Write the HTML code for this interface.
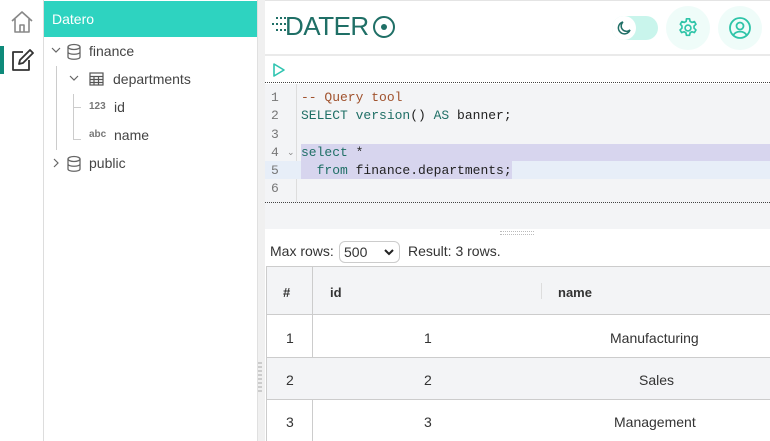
<!DOCTYPE html>
<html><head><style>
*{margin:0;padding:0;box-sizing:border-box}
body{width:770px;height:441px;overflow:hidden;background:#fff;font-family:"Liberation Sans",sans-serif;position:relative;color:#333}
.abs{position:absolute}
.mono{font-family:"Liberation Mono",monospace;font-size:13px}
.tree{font-size:14px;color:#444}
</style></head><body>
<!-- icon bar -->
<div class="abs" style="left:0;top:0;width:44px;height:441px;background:#fff;border-right:1px solid #ddd"></div>
<svg class="abs" style="left:10px;top:9px" width="24" height="26" viewBox="0 0 24 26" fill="none" stroke="#888" stroke-width="1.6" stroke-linejoin="round"><path d="M2 12 L12 3 L22 12 M5 10 V23 H19 V10 M10 23 V16 H14 V23"/></svg>
<div class="abs" style="left:0;top:46px;width:4px;height:28px;background:#0e8a7a"></div>
<svg class="abs" style="left:10px;top:47px" width="24" height="26" viewBox="0 0 24 26" fill="none" stroke="#333" stroke-width="1.8" stroke-linejoin="round"><path d="M13 5 H3 V23 H19 V13"/><path d="M9 17 L10 13 L20 3 L23 6 L13 16 Z"/></svg>
<!-- sidebar -->
<div class="abs" style="left:44px;top:1px;width:213px;height:36px;background:#2ed3c0;color:#fff;font-size:14px;line-height:36px;padding-left:8px">Datero</div>
<div class="abs" style="left:257px;top:0;width:8px;height:441px;background:#f0f0f0;border-left:1px solid #e0e0e0"></div>
<div class="abs" style="left:258px;top:362px;width:4px;height:30px;border-left:2px dotted #ccc;border-right:2px dotted #ccc"></div>
<div class="abs" style="left:56px;top:66px;width:1px;height:84px;background:#ccc"></div>
<div class="abs" style="left:73px;top:94px;width:1px;height:45px;background:#ccc"></div>
<div class="abs" style="left:73px;top:107px;width:8px;height:1px;background:#ccc"></div>
<div class="abs" style="left:73px;top:139px;width:8px;height:1px;background:#ccc"></div>
<svg class="abs" style="left:50px;top:44px" width="12" height="12" viewBox="0 0 12 12" fill="none" stroke="#666" stroke-width="1.2"><path d="M2 4 L6 8 L10 4"/></svg>
<svg class="abs" style="left:66px;top:43px" width="16" height="18" viewBox="0 0 16 18" fill="none" stroke="#666" stroke-width="1.3"><ellipse cx="8" cy="4" rx="6" ry="2.5"/><path d="M2 4 V14 C2 17 14 17 14 14 V4 M2 9 C2 12 14 12 14 9"/></svg>
<div class="abs tree" style="left:89px;top:43px">finance</div>
<svg class="abs" style="left:68px;top:72px" width="12" height="12" viewBox="0 0 12 12" fill="none" stroke="#666" stroke-width="1.2"><path d="M2 4 L6 8 L10 4"/></svg>
<svg class="abs" style="left:89px;top:72px" width="15" height="14" viewBox="0 0 15 14" fill="none" stroke="#555" stroke-width="1.2"><rect x="1" y="1" width="13" height="12"/><path d="M1 4.5H14M1 7.5H14M1 10.5H14M5 4.5V13M9.5 4.5V13"/></svg>
<div class="abs tree" style="left:113px;top:71px">departments</div>
<div class="abs" style="left:89px;top:101px;font-size:10px;font-weight:bold;color:#777">123</div>
<div class="abs tree" style="left:114px;top:99px">id</div>
<div class="abs" style="left:89px;top:129px;font-size:10px;font-weight:bold;color:#777">abc</div>
<div class="abs tree" style="left:114px;top:127px">name</div>
<svg class="abs" style="left:50px;top:157px" width="12" height="12" viewBox="0 0 12 12" fill="none" stroke="#666" stroke-width="1.2"><path d="M4 2 L8 6 L4 10"/></svg>
<svg class="abs" style="left:66px;top:155px" width="16" height="18" viewBox="0 0 16 18" fill="none" stroke="#666" stroke-width="1.3"><ellipse cx="8" cy="4" rx="6" ry="2.5"/><path d="M2 4 V14 C2 17 14 17 14 14 V4 M2 9 C2 12 14 12 14 9"/></svg>
<div class="abs tree" style="left:89px;top:155px">public</div>
<!-- header -->
<div class="abs" style="left:265px;top:0;width:505px;height:1px;background:#e4e4e4"></div>
<div class="abs" style="left:265px;top:54px;width:505px;height:2px;background:#eaeaea"></div>
<div class="abs" style="left:276px;top:17px;width:10px;height:14px;border-top:2px dotted #1f6f66;border-bottom:2px dotted #1f6f66"></div>
<div class="abs" style="left:272px;top:23px;width:14px;height:2px;border-top:2px dotted #1f6f66"></div>
<div class="abs" style="left:285px;top:12px;font-size:26px;color:#1f6f66;letter-spacing:-0.5px;line-height:28px">DATER</div>
<div class="abs" style="left:373px;top:16px;width:22px;height:22px;border:2.5px solid #1f6f66;border-radius:50%"></div>
<div class="abs" style="left:381px;top:24px;width:6px;height:6px;background:#1f6f66;border-radius:50%"></div>
<div class="abs" style="left:612px;top:16px;width:46px;height:24px;background:#c9f5ec;border-radius:12px"></div>
<div class="abs" style="left:612px;top:16px;width:24px;height:24px;background:#fff;border-radius:50%"></div>
<svg class="abs" style="left:616px;top:20px" width="16" height="16" viewBox="0 0 16 16" fill="none" stroke="#1f6f66" stroke-width="1.5"><path d="M7 2 A6 6 0 1 0 14 10 A5 5 0 0 1 7 2Z"/></svg>
<div class="abs" style="left:666px;top:6px;width:44px;height:44px;background:#effcf9;border-radius:50%"></div>
<svg class="abs" style="left:677px;top:17px" width="22" height="22" viewBox="0 0 24 24" fill="none" stroke="#2ec4a8" stroke-width="1.8" stroke-linejoin="round"><path d="M10.3 2h3.4l.6 2.8 2 1.1 2.7-.9 1.7 2.9-2.1 1.9v2.4l2.1 1.9-1.7 2.9-2.7-.9-2 1.1-.6 2.8h-3.4l-.6-2.8-2-1.1-2.7.9-1.7-2.9 2.1-1.9v-2.4L3.6 7.9l1.7-2.9 2.7.9 2-1.1z"/><circle cx="12" cy="12" r="3.2"/></svg>
<div class="abs" style="left:718px;top:6px;width:44px;height:44px;background:#effcf9;border-radius:50%"></div>
<svg class="abs" style="left:728px;top:16px" width="24" height="24" viewBox="0 0 24 24" fill="none" stroke="#2ec4a8" stroke-width="1.8"><circle cx="12" cy="12" r="10"/><circle cx="12" cy="10" r="3.5"/><path d="M5.5 19 C8 14.5 16 14.5 18.5 19"/></svg>
<!-- run bar -->
<svg class="abs" style="left:272px;top:62px" width="14" height="16" viewBox="0 0 14 16" fill="none" stroke="#2ec4b0" stroke-width="1.6" stroke-linejoin="round"><path d="M2 2 L12 8 L2 14 Z"/></svg>
<div class="abs" style="left:265px;top:82px;width:505px;height:1px;border-top:1px dotted #444"></div>
<!-- editor -->
<div class="abs" style="left:265px;top:84px;width:505px;height:145px;background:#f3f4f6"></div>
<div class="abs" style="left:296px;top:84px;width:1px;height:118px;background:#ddd"></div>
<div class="abs" style="left:301px;top:144px;width:469px;height:17px;background:#d7d5ee"></div>
<div class="abs" style="left:265px;top:161px;width:505px;height:18px;background:#e7eef8"></div>
<div class="abs" style="left:301px;top:161px;width:211px;height:18px;background:#d7d5ee"></div>
<div class="abs" style="left:265px;top:202px;width:505px;height:1px;border-top:1px dotted #444"></div>
<div class="abs" style="left:500px;top:231px;width:34px;height:4px;border-top:1px dotted #bbb;border-bottom:1px dotted #bbb"></div>
<div class="abs mono" style="left:271px;top:89px;line-height:18.3px;color:#777;width:20px">1<br>2<br>3<br>4<br>5<br>6</div>
<div class="abs" style="left:287px;top:147px;font-size:9px;color:#888">⌄</div>
<div class="abs mono" style="left:301px;top:89px;line-height:18.3px;white-space:pre;color:#222"><span style="color:#a0522d">-- Query tool</span>
<span style="color:#1f6f66">SELECT version</span>() <span style="color:#1f6f66">AS</span> banner;

<span style="color:#1f6f66">select</span> *
  <span style="color:#1f6f66">from</span> finance.departments;
</div>
<!-- results -->
<div class="abs" style="left:270px;top:243px;font-size:14px;color:#333">Max rows:</div>
<div class="abs" style="left:339px;top:241px;width:61px;height:22px;border:1px solid #ccc;border-radius:6px;font-size:14px;padding:2px 0 0 4px">500</div>
<svg class="abs" style="left:384px;top:248px" width="10" height="8" viewBox="0 0 10 8" fill="none" stroke="#222" stroke-width="2"><path d="M1 2 L5 6 L9 2"/></svg>
<div class="abs" style="left:408px;top:243px;font-size:14px;color:#333">Result: 3 rows.</div>
<div class="abs" style="left:266px;top:266px;width:504px;height:175px;border-left:1px solid #ccc;border-top:1px solid #ccc"></div>
<div class="abs" style="left:267px;top:267px;width:503px;height:48px;background:#f3f4f6;border-bottom:1px solid #ccc"></div>
<div class="abs" style="left:312px;top:267px;width:1px;height:174px;background:#ccc"></div>
<div class="abs" style="left:541px;top:283px;width:1px;height:16px;background:#ddd"></div>
<div class="abs" style="left:267px;top:357px;width:503px;height:43px;background:#f3f4f6;border-top:1px solid #ccc;border-bottom:1px solid #ccc"></div>
<div class="abs" style="left:283px;top:285px;font-size:13px;font-weight:bold">#</div>
<div class="abs" style="left:330px;top:285px;font-size:13px;font-weight:bold">id</div>
<div class="abs" style="left:558px;top:285px;font-size:13px;font-weight:bold">name</div>
<div class="abs" style="left:286px;top:330px;font-size:14px">1</div>
<div class="abs" style="left:424px;top:330px;font-size:14px">1</div>
<div class="abs" style="left:610px;top:330px;font-size:14px">Manufacturing</div>
<div class="abs" style="left:286px;top:372px;font-size:14px">2</div>
<div class="abs" style="left:424px;top:372px;font-size:14px">2</div>
<div class="abs" style="left:639px;top:372px;font-size:14px">Sales</div>
<div class="abs" style="left:286px;top:414px;font-size:14px">3</div>
<div class="abs" style="left:424px;top:414px;font-size:14px">3</div>
<div class="abs" style="left:614px;top:414px;font-size:14px">Management</div>
</body></html>
